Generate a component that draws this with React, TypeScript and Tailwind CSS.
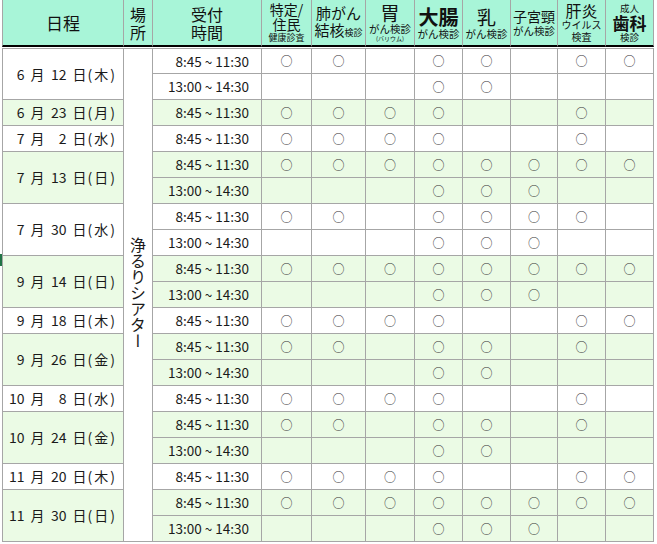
import React from 'react';

type Row = { time: string; marks: number[] };
type Group = { m: string; d: string; w: string; rows: Row[] };

const AM = '8:45 ~ 11:30';
const PM = '13:00 ~ 14:30';

// 特定, 肺, 胃, 大腸, 乳, 子宮, 肝炎, 歯科
const groups: Group[] = [
  { m: '6', d: '12', w: '木', rows: [{ time: AM, marks: [1, 1, 0, 1, 1, 0, 1, 1] }, { time: PM, marks: [0, 0, 0, 1, 1, 0, 0, 0] }] },
  { m: '6', d: '23', w: '月', rows: [{ time: AM, marks: [1, 1, 1, 1, 0, 0, 1, 0] }] },
  { m: '7', d: '2', w: '水', rows: [{ time: AM, marks: [1, 1, 1, 1, 0, 0, 1, 0] }] },
  { m: '7', d: '13', w: '日', rows: [{ time: AM, marks: [1, 1, 1, 1, 1, 1, 1, 1] }, { time: PM, marks: [0, 0, 0, 1, 1, 1, 0, 0] }] },
  { m: '7', d: '30', w: '水', rows: [{ time: AM, marks: [1, 1, 0, 1, 1, 1, 1, 0] }, { time: PM, marks: [0, 0, 0, 1, 1, 1, 0, 0] }] },
  { m: '9', d: '14', w: '日', rows: [{ time: AM, marks: [1, 1, 1, 1, 1, 1, 1, 1] }, { time: PM, marks: [0, 0, 0, 1, 1, 1, 0, 0] }] },
  { m: '9', d: '18', w: '木', rows: [{ time: AM, marks: [1, 1, 1, 1, 0, 0, 1, 1] }] },
  { m: '9', d: '26', w: '金', rows: [{ time: AM, marks: [1, 1, 0, 1, 1, 0, 1, 0] }, { time: PM, marks: [0, 0, 0, 1, 1, 0, 0, 0] }] },
  { m: '10', d: '8', w: '水', rows: [{ time: AM, marks: [1, 1, 1, 1, 0, 0, 1, 0] }] },
  { m: '10', d: '24', w: '金', rows: [{ time: AM, marks: [1, 1, 0, 1, 1, 0, 1, 0] }, { time: PM, marks: [0, 0, 0, 1, 1, 0, 0, 0] }] },
  { m: '11', d: '20', w: '木', rows: [{ time: AM, marks: [1, 1, 1, 1, 0, 0, 1, 1] }] },
  { m: '11', d: '30', w: '日', rows: [{ time: AM, marks: [1, 1, 1, 1, 1, 1, 1, 1] }, { time: PM, marks: [0, 0, 0, 1, 1, 1, 0, 0] }] },
];

const totalRows = groups.reduce((n, g) => n + g.rows.length, 0);

const th = 'border-r border-b-2 border-r-[#a6a6a6] border-b-black bg-[#a8f5d8] p-0 text-center align-middle font-normal text-[#111]';
const td = 'border-r border-b border-[#a6a6a6] p-0 h-[26px]';

export default function App() {
  let first = true;
  return (
    <div className="relative w-[657px] h-[544px] overflow-hidden bg-white" style={{ fontFamily: '"Noto Sans CJK JP", "Noto Sans", sans-serif' }}>
      <div className="absolute left-0 top-[254px] w-[2px] h-[12px] bg-[#217346]" />
      <table className="ml-[2px] w-[652px] table-fixed border-separate border-spacing-0 text-[#1a1a1a]">
        <colgroup>
          <col className="w-[122px]" />
          <col className="w-[29px]" />
          <col className="w-[109px]" />
          <col className="w-[50px]" />
          <col className="w-[54px]" />
          <col className="w-[49px]" />
          <col className="w-[48px]" />
          <col className="w-[48px]" />
          <col className="w-[47px]" />
          <col className="w-[48px]" />
          <col className="w-[48px]" />
        </colgroup>
        <thead>
          <tr className="h-[47px]">
            <th className={`${th} border-l border-l-[#a6a6a6] text-[17px]`}>日程</th>
            <th className={`${th} text-[16px] leading-[18px]`}>場<br />所</th>
            <th className={`${th} text-[16px] leading-[18px]`}>受付<br />時間</th>
            <th className={th}>
              <div className="text-[14px] leading-[15px]">特定/</div>
              <div className="text-[14px] leading-[15px]">住民</div>
              <div className="text-[9px] leading-[11px]">健康診査</div>
            </th>
            <th className={th}>
              <div className="text-[15px] leading-[16px]">肺がん</div>
              <div className="text-[15px] leading-[17px]">結核<span className="text-[9px]">検診</span></div>
            </th>
            <th className={th}>
              <div className="text-[19px] leading-[19px]">胃</div>
              <div className="text-[10.5px] leading-[13px]">がん検診</div>
              <div className="text-[6px] leading-[7px]">(バリウム)</div>
            </th>
            <th className={th}>
              <div className="text-[20px] leading-[21px] font-bold">大腸</div>
              <div className="text-[10.5px] leading-[13px]">がん検診</div>
            </th>
            <th className={th}>
              <div className="text-[19px] leading-[21px]">乳</div>
              <div className="text-[10.5px] leading-[13px]">がん検診</div>
            </th>
            <th className={th}>
              <div className="text-[14px] leading-[16px]">子宮頸</div>
              <div className="text-[10.5px] leading-[13px]">がん検診</div>
            </th>
            <th className={th}>
              <div className="text-[16px] leading-[17px]">肝炎</div>
              <div className="text-[10px] leading-[12px]">ウイルス</div>
              <div className="text-[10px] leading-[12px]">検査</div>
            </th>
            <th className={th}>
              <div className="text-[9.5px] leading-[11px]">成人</div>
              <div className="text-[17px] leading-[18px] font-bold">歯科</div>
              <div className="text-[9.5px] leading-[11px]">検診</div>
            </th>
          </tr>
          <tr>
            <td colSpan={11} className="h-px p-0 bg-white" />
          </tr>
        </thead>
        <tbody>
          {groups.map((g, gi) => {
            const bg = gi % 2 === 1 ? 'bg-[#ebfbe5]' : 'bg-white';
            return g.rows.map((r, ri) => {
              const top = first ? 'border-t' : '';
              const isFirst = first;
              first = false;
              return (
                <tr key={`${gi}-${ri}`}>
                  {ri === 0 && (
                    <td rowSpan={g.rows.length} className={`${td} ${top} ${bg} border-l text-[14px] text-right pr-[6px]`}>
                      <span className="inline-flex items-baseline justify-end whitespace-pre">
                        <span>{g.m}</span>
                        <span className="mx-[6px]">月</span>
                        <span className="inline-block w-[16px] text-right">{g.d}</span>
                        <span className="ml-[6px]">日</span>
                        <span className="ml-[1px] tracking-[2px]">({g.w})</span>
                      </span>
                    </td>
                  )}
                  {isFirst && (
                    <td rowSpan={totalRows} className={`${td} ${top} bg-white text-center align-middle`}>
                      <span className="inline-block text-[16px] leading-[20px] [writing-mode:vertical-rl]">浄るりシアター</span>
                    </td>
                  )}
                  <td className={`${td} ${top} ${bg} text-right pr-[12px] text-[13.5px] whitespace-pre`}>{r.time}</td>
                  {r.marks.map((mk, i) => (
                    <td key={i} className={`${td} ${top} ${bg} text-center text-[12px] text-[#333]`}>{mk ? '○' : ''}</td>
                  ))}
                </tr>
              );
            });
          })}
        </tbody>
      </table>
    </div>
  );
}
